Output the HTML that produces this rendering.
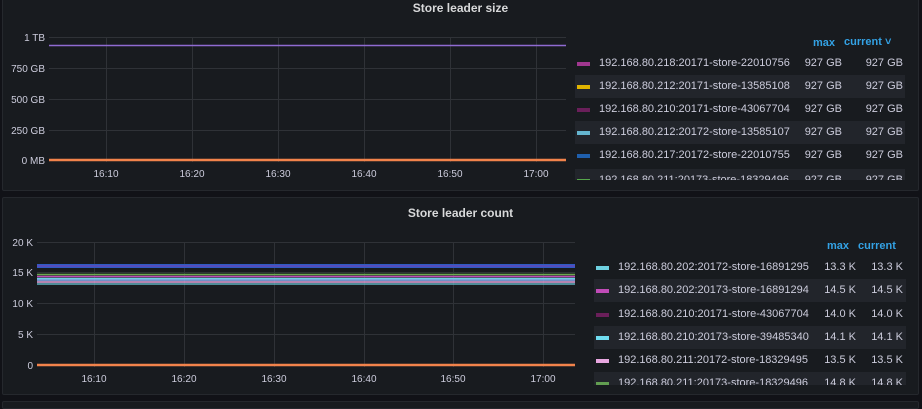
<!DOCTYPE html><html><head><style>
html,body{margin:0;width:922px;height:409px;overflow:hidden}
body{background:#111217;font-family:"Liberation Sans",sans-serif;position:relative}
.p{position:absolute;left:2px;width:915px;background:#181b1f;border:1px solid #25282d;border-radius:2px}
.t{position:absolute;color:#d8d9da;font-size:12px;font-weight:bold;text-align:center;width:100%}
.lg{position:absolute;font-size:11px;color:#ccccdc;overflow:hidden}
.r{position:absolute;height:23px;line-height:23px;white-space:nowrap}
.r.a{background:#22252b}
.sw{position:absolute;top:10px;width:13px;height:4px}
.n{position:absolute}
.v{position:absolute;text-align:right}
.h{position:absolute;color:#33a2e5;font-weight:bold;font-size:11px}
.ax{font-family:"Liberation Sans",sans-serif;font-size:10px;fill:#ccccdc}
</style></head><body>
<div class="p" style="top:-5px;height:194px"><div class="t" style="top:5px">Store leader size</div></div>
<div class="p" style="top:197px;height:196px"><div class="t" style="top:8px">Store leader count</div></div>
<div class="p" style="top:401px;height:6px"></div>
<svg width="922" height="409" style="position:absolute;left:0;top:0">
<g stroke="#2f3237" stroke-width="1">
<line x1="49" x2="566" y1="37.5" y2="37.5"/><line x1="49" x2="566" y1="68.5" y2="68.5"/><line x1="49" x2="566" y1="99.5" y2="99.5"/><line x1="49" x2="566" y1="130.5" y2="130.5"/>
<line x1="106.5" x2="106.5" y1="37" y2="162"/><line x1="192.5" x2="192.5" y1="37" y2="162"/><line x1="278.5" x2="278.5" y1="37" y2="162"/><line x1="364.5" x2="364.5" y1="37" y2="162"/><line x1="450.5" x2="450.5" y1="37" y2="162"/><line x1="536.5" x2="536.5" y1="37" y2="162"/>
<line x1="37" x2="575" y1="242.5" y2="242.5"/><line x1="37" x2="575" y1="272.5" y2="272.5"/><line x1="37" x2="575" y1="303.5" y2="303.5"/><line x1="37" x2="575" y1="334.5" y2="334.5"/>
<line x1="94.5" x2="94.5" y1="242" y2="367"/><line x1="184.5" x2="184.5" y1="242" y2="367"/><line x1="274.5" x2="274.5" y1="242" y2="367"/><line x1="364.5" x2="364.5" y1="242" y2="367"/><line x1="453.5" x2="453.5" y1="242" y2="367"/><line x1="543.5" x2="543.5" y1="242" y2="367"/>
</g>
<line x1="49" x2="566" y1="45.5" y2="45.5" stroke="#8f6bd1" stroke-width="1.5"/>
<line x1="49" x2="566" y1="160" y2="160" stroke="#f2834b" stroke-width="2.5"/>
<rect x="37" y="264" width="538" height="4" fill="#2f5bc4"/>
<line x1="37" x2="575" y1="266" y2="266" stroke="#7a3fb0" stroke-width="1"/>
<line x1="37" x2="575" y1="274.5" y2="274.5" stroke="#6aa84f" stroke-width="1.5"/>
<line x1="37" x2="575" y1="276.5" y2="276.5" stroke="#c04bb7" stroke-width="1.5"/>
<line x1="37" x2="575" y1="278.5" y2="278.5" stroke="#6ed0e0" stroke-width="1.5"/>
<line x1="37" x2="575" y1="280" y2="280" stroke="#8ab8ff" stroke-width="1.5"/>
<line x1="37" x2="575" y1="282" y2="282" stroke="#e8a7e0" stroke-width="1.5"/>
<line x1="37" x2="575" y1="284" y2="284" stroke="#6ed0e0" stroke-width="1.2"/>
<line x1="37" x2="575" y1="365" y2="365" stroke="#f2834b" stroke-width="2.5"/>
<g class="ax" text-anchor="end"><text x="45" y="41">1 TB</text><text x="45" y="72">750 GB</text><text x="45" y="103">500 GB</text><text x="45" y="134">250 GB</text><text x="45" y="164">0 MB</text>
<text x="33" y="246">20 K</text><text x="33" y="276">15 K</text><text x="33" y="307">10 K</text><text x="33" y="338">5 K</text><text x="33" y="369">0</text></g>
<g class="ax" text-anchor="middle"><text x="106" y="177">16:10</text><text x="192" y="177">16:20</text><text x="278" y="177">16:30</text><text x="364" y="177">16:40</text><text x="450" y="177">16:50</text><text x="536" y="177">17:00</text>
<text x="94" y="382">16:10</text><text x="184" y="382">16:20</text><text x="274" y="382">16:30</text><text x="364" y="382">16:40</text><text x="453" y="382">16:50</text><text x="543" y="382">17:00</text></g>
</svg>
<div class="h" style="left:813px;top:37px">max</div><div class="h" style="left:844px;top:36px">current ˅</div>
<div class="lg" style="left:575px;top:52px;width:331px;height:128px">
<div class="r" style="top:0;width:330px"><div class="sw" style="left:2px;background:#a0378f"></div><div class="n" style="left:24px">192.168.80.218:20171-store-22010756</div><div class="v" style="right:63px">927 GB</div><div class="v" style="right:2px">927 GB</div></div>
<div class="r a" style="top:23px;width:330px"><div class="sw" style="left:2px;background:#e0b400"></div><div class="n" style="left:24px">192.168.80.212:20171-store-13585108</div><div class="v" style="right:63px">927 GB</div><div class="v" style="right:2px">927 GB</div></div>
<div class="r" style="top:46px;width:330px"><div class="sw" style="left:2px;background:#6a1f5a"></div><div class="n" style="left:24px">192.168.80.210:20171-store-43067704</div><div class="v" style="right:63px">927 GB</div><div class="v" style="right:2px">927 GB</div></div>
<div class="r a" style="top:69px;width:330px"><div class="sw" style="left:2px;background:#65b5cf"></div><div class="n" style="left:24px">192.168.80.212:20172-store-13585107</div><div class="v" style="right:63px">927 GB</div><div class="v" style="right:2px">927 GB</div></div>
<div class="r" style="top:92px;width:330px"><div class="sw" style="left:2px;background:#1f5fad"></div><div class="n" style="left:24px">192.168.80.217:20172-store-22010755</div><div class="v" style="right:63px">927 GB</div><div class="v" style="right:2px">927 GB</div></div>
<div class="r a" style="top:117px;width:330px"><div class="sw" style="left:2px;background:#56a64b"></div><div class="n" style="left:24px">192.168.80.211:20173-store-18329496</div><div class="v" style="right:63px">927 GB</div><div class="v" style="right:2px">927 GB</div></div>
</div>
<div class="h" style="left:827px;top:240px">max</div><div class="h" style="left:858px;top:240px">current</div>
<div class="lg" style="left:594px;top:256px;width:312px;height:129px">
<div class="r" style="top:0;width:312px"><div class="sw" style="left:2px;background:#6ed0e0"></div><div class="n" style="left:24px">192.168.80.202:20172-store-16891295</div><div class="v" style="right:50px">13.3 K</div><div class="v" style="right:3px">13.3 K</div></div>
<div class="r a" style="top:23px;width:312px"><div class="sw" style="left:2px;background:#c04bb7"></div><div class="n" style="left:24px">192.168.80.202:20173-store-16891294</div><div class="v" style="right:50px">14.5 K</div><div class="v" style="right:3px">14.5 K</div></div>
<div class="r" style="top:47px;width:312px"><div class="sw" style="left:2px;background:#6a1f5a"></div><div class="n" style="left:24px">192.168.80.210:20171-store-43067704</div><div class="v" style="right:50px">14.0 K</div><div class="v" style="right:3px">14.0 K</div></div>
<div class="r a" style="top:70px;width:312px"><div class="sw" style="left:2px;background:#6fdcf0"></div><div class="n" style="left:24px">192.168.80.210:20173-store-39485340</div><div class="v" style="right:50px">14.1 K</div><div class="v" style="right:3px">14.1 K</div></div>
<div class="r" style="top:93px;width:312px"><div class="sw" style="left:2px;background:#e8a7e0"></div><div class="n" style="left:24px">192.168.80.211:20172-store-18329495</div><div class="v" style="right:50px">13.5 K</div><div class="v" style="right:3px">13.5 K</div></div>
<div class="r a" style="top:116px;width:312px"><div class="sw" style="left:2px;background:#629e51"></div><div class="n" style="left:24px">192.168.80.211:20173-store-18329496</div><div class="v" style="right:50px">14.8 K</div><div class="v" style="right:3px">14.8 K</div></div>
</div>
</body></html>
